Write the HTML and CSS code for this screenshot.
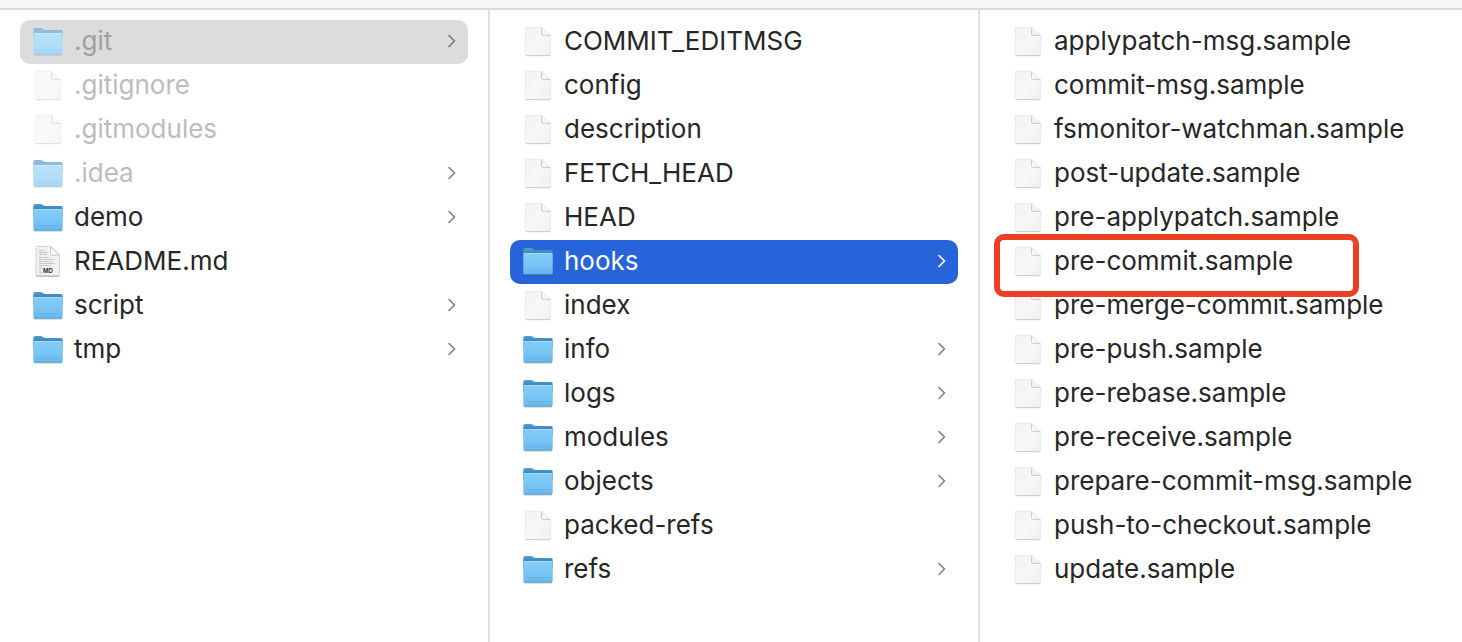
FILE: index.html
```html
<!DOCTYPE html>
<html lang="en">
<head>
<meta charset="utf-8">
<title>.git</title>
<link rel="stylesheet" href="styles.css">
</head>
<body>
<svg class="defs" aria-hidden="true">
  <defs>
    <linearGradient id="front" x1="0" y1="0" x2="0" y2="1"><stop offset="0" stop-color="#86cdf8"/><stop offset="1" stop-color="#6cbcf0"/></linearGradient>
    <linearGradient id="back" x1="0" y1="0" x2="0" y2="1"><stop offset="0" stop-color="#559fd4"/><stop offset=".35" stop-color="#3c87bf"/></linearGradient>
    <linearGradient id="front-light" x1="0" y1="0" x2="0" y2="1"><stop offset="0" stop-color="#b9e3fb"/><stop offset="1" stop-color="#a9daf7"/></linearGradient>
    <linearGradient id="paper" x1="0" y1="0" x2="1" y2="1"><stop offset="0" stop-color="#f1f1f1"/><stop offset=".5" stop-color="#f8f8f8"/><stop offset="1" stop-color="#efefef"/></linearGradient>
    <linearGradient id="flap" x1="0" y1="1" x2="1" y2="0"><stop offset="0" stop-color="#ffffff"/><stop offset=".5" stop-color="#f0f0f0"/></linearGradient>
  </defs>
  <symbol id="folder" viewBox="0 -1 32 32">
    <path d="M2 28.8h28" stroke="#000" stroke-opacity=".25" stroke-width="1.4"/>
    <path d="M1.3 4q0-2 2-2h5.2q1.4 0 2.6 1t2.6 1H29q1.7 0 1.7 1.8V15H1.3z" fill="url(#back)"/>
    <path d="M1.3 8.4q0-1.4 1.4-1.4h26.6q1.4 0 1.4 1.4v18.6q0 1.4-1.4 1.4H2.7q-1.4 0-1.4-1.4z" fill="url(#front)"/>
    <path d="M2 7.5h28" stroke="#a5dcfb"/>
    <path d="M2 23.5h28M2 25.500h28" stroke="#58a9df" stroke-opacity=".45" stroke-width=".8"/>
    <path d="M2.3 28h27.4" stroke="#4c98c9" stroke-width=".8"/>
  </symbol>
  <symbol id="folder-light" viewBox="0 -1 32 32">
    <path d="M2 28.8h28" stroke="#000" stroke-opacity=".14" stroke-width="1.4"/>
    <path d="M1.3 4q0-2 2-2h5.2q1.4 0 2.6 1t2.6 1H29q1.7 0 1.7 1.8V15H1.3z" fill="#8fbcdd"/>
    <path d="M1.3 8.4q0-1.4 1.4-1.4h26.6q1.4 0 1.4 1.4v18.6q0 1.4-1.4 1.4H2.7q-1.4 0-1.4-1.4z" fill="url(#front-light)"/>
    <path d="M2 7.5h28" stroke="#c9ebfd"/>
    <path d="M2 23.500h28M2 25.500h28" stroke="#8fc6ea" stroke-opacity=".45" stroke-width=".8"/>
    <path d="M2.3 28h27.400" stroke="#9cc6e0" stroke-width=".8"/>
  </symbol>
  <symbol id="file" viewBox="0 -1 32 32">
    <path d="M4.500 1.2h15l9.2 8.2v19.100q0 1.2-1.2 1.2h-23q-1.2 0-1.2-1.2V2.400q0-1.2 1.2-1.2z" fill="url(#paper)" stroke="#e4e4e4" stroke-width=".7"/>
    <path d="M4 29.6h24" stroke="#cbcbcb" stroke-width=".9"/>
    <path d="M19.6 1.2l9 8.2h-7.800q-1.2 0-1.2-1.2z" fill="url(#flap)"/>
    <path d="M19.600 1.500v6.700q0 1.200 1.200 1.200h7.500" fill="none" stroke="#bcbcbc" stroke-width=".8"/>
  </symbol>
  <symbol id="chevron" viewBox="0 0 8 14"><path d="M1 1.500l5.500 5.500-5.500 5.500" fill="none" stroke="currentColor" stroke-width="1.600" stroke-linecap="round" stroke-linejoin="round"/></symbol>
</svg>
<header class="toolbar"></header>
<main class="browser">
  <ul class="column">
    <li><button class="row current dim"><svg class="icon"><use href="#folder-light"/></svg><span class="name">.git</span><svg class="chevron"><use href="#chevron"/></svg></button></li>
    <li><button class="row dim"><svg class="icon faded"><use href="#file"/></svg><span class="name">.gitignore</span></button></li>
    <li><button class="row dim"><svg class="icon faded"><use href="#file"/></svg><span class="name">.gitmodules</span></button></li>
    <li><button class="row dim"><svg class="icon"><use href="#folder-light"/></svg><span class="name">.idea</span><svg class="chevron"><use href="#chevron"/></svg></button></li>
    <li><button class="row"><svg class="icon"><use href="#folder"/></svg><span class="name">demo</span><svg class="chevron"><use href="#chevron"/></svg></button></li>
    <li><button class="row">
      <svg class="icon" viewBox="0 -1 32 32">
        <path d="M5 .3h13.500l9 9v19.400q0 1.200-1.200 1.200H5q-1 0-1-1.200V1.500Q4 .3 5 .3z" fill="#f1f1f1" stroke="#c8c8c8" stroke-width=".8"/>
        <path d="M4.300 30.200h23" stroke="#a8a8a8" stroke-width=".9"/>
        <path d="M7 4.500h5M7 6.500h9M7 8.500h8M7 11.500h10M7 13.500h16M7 15.500h13M7 17.500h16M7 19.500h12M7 22h3M7 24.500h2M7 27h3" stroke="#b2b2b2" stroke-width=".8" stroke-dasharray="3 .6 1.600 .5"/>
        <path d="M18.500 .3l9 9h-8q-1 0-1-1z" fill="url(#flap)" stroke="#b8b8b8" stroke-width=".7"/>
        <text x="16" y="27" class="badge">MD</text>
      </svg>
      <span class="name">README.md</span></button></li>
    <li><button class="row"><svg class="icon"><use href="#folder"/></svg><span class="name">script</span><svg class="chevron"><use href="#chevron"/></svg></button></li>
    <li><button class="row"><svg class="icon"><use href="#folder"/></svg><span class="name">tmp</span><svg class="chevron"><use href="#chevron"/></svg></button></li>
  </ul>
  <ul class="column">
    <li><button class="row"><svg class="icon"><use href="#file"/></svg><span class="name">COMMIT_EDITMSG</span></button></li>
    <li><button class="row"><svg class="icon"><use href="#file"/></svg><span class="name">config</span></button></li>
    <li><button class="row"><svg class="icon"><use href="#file"/></svg><span class="name">description</span></button></li>
    <li><button class="row"><svg class="icon"><use href="#file"/></svg><span class="name">FETCH_HEAD</span></button></li>
    <li><button class="row"><svg class="icon"><use href="#file"/></svg><span class="name">HEAD</span></button></li>
    <li><button class="row selected"><svg class="icon"><use href="#folder"/></svg><span class="name">hooks</span><svg class="chevron"><use href="#chevron"/></svg></button></li>
    <li><button class="row"><svg class="icon"><use href="#file"/></svg><span class="name">index</span></button></li>
    <li><button class="row"><svg class="icon"><use href="#folder"/></svg><span class="name">info</span><svg class="chevron"><use href="#chevron"/></svg></button></li>
    <li><button class="row"><svg class="icon"><use href="#folder"/></svg><span class="name">logs</span><svg class="chevron"><use href="#chevron"/></svg></button></li>
    <li><button class="row"><svg class="icon"><use href="#folder"/></svg><span class="name">modules</span><svg class="chevron"><use href="#chevron"/></svg></button></li>
    <li><button class="row"><svg class="icon"><use href="#folder"/></svg><span class="name">objects</span><svg class="chevron"><use href="#chevron"/></svg></button></li>
    <li><button class="row"><svg class="icon"><use href="#file"/></svg><span class="name">packed-refs</span></button></li>
    <li><button class="row"><svg class="icon"><use href="#folder"/></svg><span class="name">refs</span><svg class="chevron"><use href="#chevron"/></svg></button></li>
  </ul>
  <ul class="column">
    <li><button class="row"><svg class="icon"><use href="#file"/></svg><span class="name">applypatch-msg.sample</span></button></li>
    <li><button class="row"><svg class="icon"><use href="#file"/></svg><span class="name">commit-msg.sample</span></button></li>
    <li><button class="row"><svg class="icon"><use href="#file"/></svg><span class="name">fsmonitor-watchman.sample</span></button></li>
    <li><button class="row"><svg class="icon"><use href="#file"/></svg><span class="name">post-update.sample</span></button></li>
    <li><button class="row"><svg class="icon"><use href="#file"/></svg><span class="name">pre-applypatch.sample</span></button></li>
    <li class="marked"><button class="row"><svg class="icon"><use href="#file"/></svg><span class="name">pre-commit.sample</span></button></li>
    <li><button class="row"><svg class="icon"><use href="#file"/></svg><span class="name">pre-merge-commit.sample</span></button></li>
    <li><button class="row"><svg class="icon"><use href="#file"/></svg><span class="name">pre-push.sample</span></button></li>
    <li><button class="row"><svg class="icon"><use href="#file"/></svg><span class="name">pre-rebase.sample</span></button></li>
    <li><button class="row"><svg class="icon"><use href="#file"/></svg><span class="name">pre-receive.sample</span></button></li>
    <li><button class="row"><svg class="icon"><use href="#file"/></svg><span class="name">prepare-commit-msg.sample</span></button></li>
    <li><button class="row"><svg class="icon"><use href="#file"/></svg><span class="name">push-to-checkout.sample</span></button></li>
    <li><button class="row"><svg class="icon"><use href="#file"/></svg><span class="name">update.sample</span></button></li>
  </ul>
</main>
</body>
</html>
```
FILE: styles.css
```css
*, *::after { box-sizing: border-box; }

body {
  display: flex;
  flex-direction: column;
  min-height: 100vh;
  margin: 0;
  background: #fff;
  color: #262626;
  font: 26px/32px Inter, "Liberation Sans", sans-serif;
}

.defs { position: absolute; width: 0; height: 0; }

.toolbar {
  height: 10px;
  background: #f6f6f6;
  border-bottom: 2px solid #dadada;
}

.browser {
  display: grid;
  flex: 1;
  grid-template-columns: 490fr 490fr 482fr;
}

.column {
  min-width: 0;
  margin: 0;
  padding: 10px 20px;
  border-right: 2px solid #e0e0e0;
  list-style: none;
}

.column:last-child { border-right: 0; }

.row {
  display: flex;
  align-items: center;
  gap: 10px;
  width: 100%;
  height: 44px;
  padding: 0 12px 2px;
  border: 0;
  border-radius: 10px;
  background: none;
  color: inherit;
  font: inherit;
  text-align: left;
}

.icon { flex: none; width: 32px; height: 32px; }
.name { flex: 1; white-space: nowrap; }
.chevron { flex: none; width: 8px; height: 14px; color: #808080; }

.faded { opacity: 0.6; }
.dim .name { color: #bcbcbc; }

.current { background: #dcdcdc; }
.current .name { color: #9f9f9f; }
.current .chevron { color: #757575; }

.selected { background: #2764da; color: #fff; }
.selected .chevron { color: #fff; }

.marked { position: relative; }

.marked::after {
  content: "";
  position: absolute;
  top: -6px;
  left: -6px;
  width: 365px;
  height: 63px;
  border: 6px solid #ec3f26;
  border-radius: 10px;
  pointer-events: none;
}

.badge {
  fill: #222;
  font: 600 6px Inter, sans-serif;
  text-anchor: middle;
}
```
